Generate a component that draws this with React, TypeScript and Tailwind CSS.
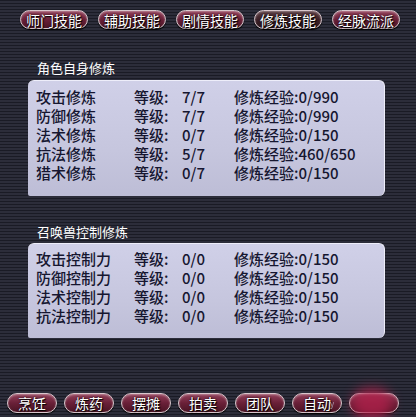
import React from "react"

const topTabs = [
  { label: "师门技能", active: false },
  { label: "辅助技能", active: false },
  { label: "剧情技能", active: false },
  { label: "修炼技能", active: true },
  { label: "经脉流派", active: false },
]

const selfRows = [
  { name: "攻击修炼", level: "7/7", exp: "0/990" },
  { name: "防御修炼", level: "7/7", exp: "0/990" },
  { name: "法术修炼", level: "0/7", exp: "0/150" },
  { name: "抗法修炼", level: "5/7", exp: "460/650" },
  { name: "猎术修炼", level: "0/7", exp: "0/150" },
]

const petRows = [
  { name: "攻击控制力", level: "0/0", exp: "0/150" },
  { name: "防御控制力", level: "0/0", exp: "0/150" },
  { name: "法术控制力", level: "0/0", exp: "0/150" },
  { name: "抗法控制力", level: "0/0", exp: "0/150" },
]

const bottomTabs = ["烹饪", "炼药", "摆摊", "拍卖", "团队", "自动"]

function PillButton({ label, active, className }: { label: string; active?: boolean; className?: string }) {
  return (
    <div
      className={
        "flex items-center justify-center rounded-full border border-[#d8c6cc] leading-none text-white [text-shadow:0_0_2px_#000,1px_1px_1px_#000] shadow-[inset_0_1px_2px_rgba(255,255,255,0.35),0_1px_1px_#000] " +
        (active
          ? "bg-[linear-gradient(180deg,#5a3a40_0%,#3a1f26_55%,#2a1419_100%)] "
          : "bg-[linear-gradient(180deg,#93405a_0%,#6a2038_50%,#4a1424_100%)] ") +
        (className ?? "")
      }
    >
      {label}
    </div>
  )
}

function Row({ name, level, exp }: { name: string; level: string; exp: string }) {
  return (
    <div className="flex h-[19px] items-center text-[15px] font-medium leading-[19px] text-[#161630]">
      <span className="w-[106px] pl-[8px]">{name}</span>
      <span className="w-[48px]">等级:</span>
      <span className="w-[52px]">{level}</span>
      <span>修炼经验:{exp}</span>
    </div>
  )
}

export default function App() {
  return (
    <div
      className="relative flex h-[417px] w-[416px] flex-col overflow-hidden bg-[repeating-linear-gradient(180deg,#1a1b25_0px,#1a1b25_1px,#2c2d3a_1px,#2c2d3a_3px)]"
      style={{ fontFamily: '"Noto Sans CJK SC", "Noto Sans", sans-serif' }}
    >
      {/* top tabs */}
      <div className="flex gap-[10px] pl-[20px] pt-[10px]">
        {topTabs.map((t) => (
          <PillButton key={t.label} label={t.label} active={t.active} className="h-[19px] w-[68px] text-[14px]" />
        ))}
      </div>

      <div className="ml-[37px] mt-[31px] text-[13px] leading-[16px] text-white">角色自身修炼</div>
      <div className="ml-[28px] mt-[4px] h-[116px] w-[357px] rounded-[6px] rounded-bl-[2px] border-t border-r border-[#eeeefa] bg-[linear-gradient(180deg,#d0d0e8_0%,#c6c6de_60%,#bdbdd6_100%)] pt-[6px]">
        {selfRows.map((r) => (
          <Row key={r.name} {...r} />
        ))}
      </div>

      <div className="ml-[37px] mt-[28px] text-[13px] leading-[16px] text-white">召唤兽控制修炼</div>
      <div className="ml-[28px] mt-[3px] h-[95px] w-[357px] rounded-[6px] rounded-bl-[2px] border-t border-r border-[#eeeefa] bg-[linear-gradient(180deg,#d0d0e8_0%,#c6c6de_60%,#bdbdd6_100%)] pt-[5px]">
        {petRows.map((r) => (
          <Row key={r.name} {...r} />
        ))}
      </div>

      {/* bottom tabs */}
      <div className="mt-auto mb-[4px] flex gap-[7px] pl-[7px]">
        {bottomTabs.map((t) => (
          <PillButton key={t} label={t} className="h-[20px] w-[50px] text-[14px]" />
        ))}
        <PillButton label="" className="h-[20px] w-[50px]" />
      </div>

      {/* blurred pink blob at the corner */}
      <div className="absolute left-[352px] top-[388px] h-[32px] w-[40px] rounded-full bg-[#b0204a] opacity-80 blur-[6px]" />
      <div className="absolute left-[330px] top-[400px] text-[8px] leading-none text-[#c8c8d0] opacity-70">y</div>
    </div>
  )
}
